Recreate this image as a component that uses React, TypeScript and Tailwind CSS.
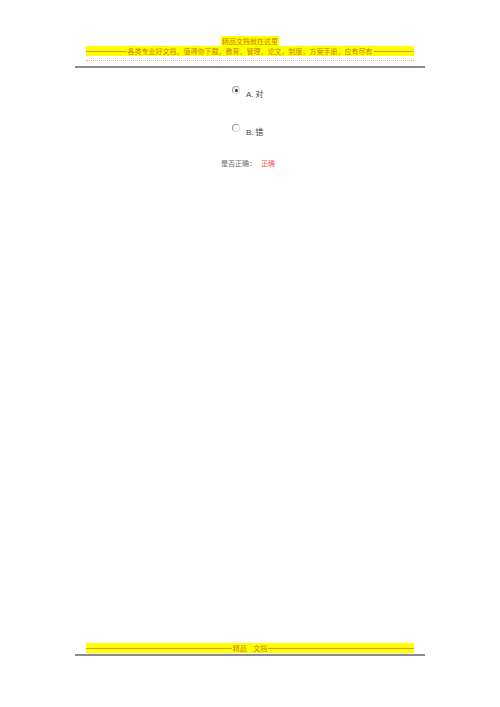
function Dashes() {
  return <span className="min-w-0 flex-1 border-t border-[#d89a20]" />;
}

function Radio({ checked }: { checked?: boolean }) {
  return (
    <span className="flex h-[8px] w-[8px] items-center justify-center rounded-full border border-[#9a9a9a] border-r-[#dcdcdc] border-b-[#dcdcdc] bg-white">
      {checked && <span className="h-[3px] w-[3px] rounded-full bg-[#333]" />}
    </span>
  );
}

export default function App() {
  return (
    <div className="flex h-[707px] w-[500px] flex-col bg-white font-['Noto_Sans_CJK_SC','Noto_Sans',sans-serif]">
      <div className="px-[86px] pt-[36px]">
        <div className="flex justify-center">
          <span className="bg-[#ffff00] px-[1px] text-[7px] leading-[10px] text-[#c88000]">
            精品文档就在这里
          </span>
        </div>
        <div className="flex h-[10px] items-center gap-[1px] whitespace-nowrap bg-[#ffff00] text-[7px] leading-[10px] text-[#c88000]">
          <Dashes />
          <span>各类专业好文档，值得你下载，教育，管理，论文，制度，方案手册，应有尽有</span>
          <Dashes />
        </div>
        <div className="mt-[4px] border-t border-dotted border-[#f2a0a0]" />
      </div>
      <div className="mx-[75px] mt-[5px] border-t-2 border-[#8a8a8a]" />

      <div className="flex flex-col">
        <div className="ml-[232px] mt-[18px] flex items-start gap-[6px]">
          <Radio checked />
          <span className="mt-[3px] text-[8px] leading-[10px] text-[#444]">
            <span className="font-['Liberation_Sans']">A.</span> 对
          </span>
        </div>
        <div className="ml-[232px] mt-[24px] flex items-start gap-[6px]">
          <Radio />
          <span className="mt-[3px] text-[8px] leading-[10px] text-[#444]">
            <span className="font-['Liberation_Sans']">B.</span> 错
          </span>
        </div>
        <div className="ml-[221px] mt-[20px] flex text-[7px] leading-[10px]">
          <span className="text-[#666]">是否正确：</span>
          <span className="ml-[5px] text-[#ff4a4a]">正确</span>
        </div>
      </div>

      <div className="flex-1" />

      <div className="mb-[51px]">
        <div className="mx-[86px] flex h-[10px] items-center gap-[1px] whitespace-nowrap bg-[#ffff00] text-[7px] leading-[10px] text-[#c88000]">
          <Dashes />
          <span>精品&nbsp;&nbsp;&nbsp;&nbsp;文档</span>
          <Dashes />
        </div>
        <div className="mx-[75px] mt-[1px] border-t-2 border-[#8a8a8a]" />
      </div>
    </div>
  );
}
